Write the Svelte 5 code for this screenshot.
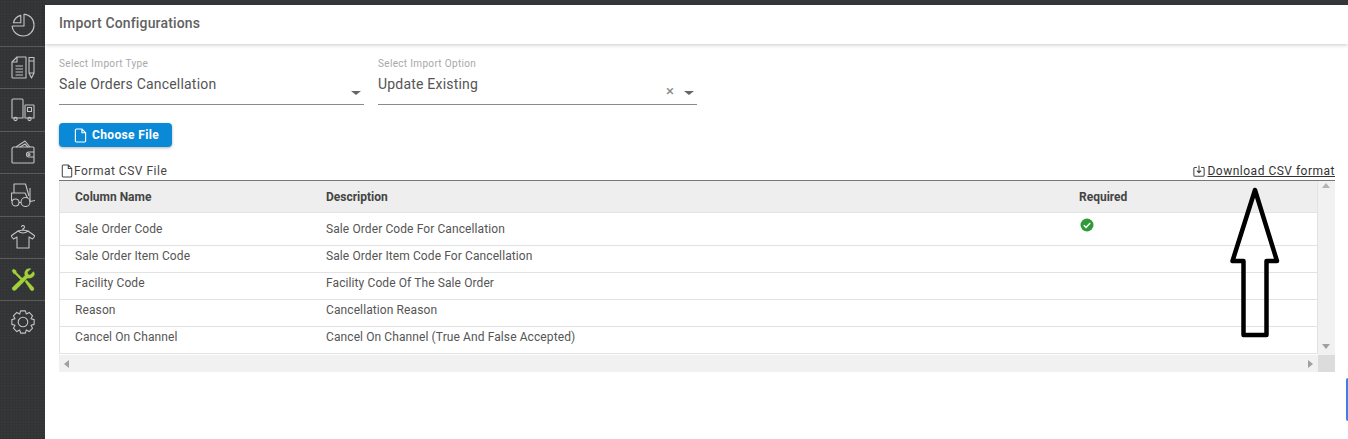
<script>
    const columns = [
        { name: 'Sale Order Code', description: 'Sale Order Code For Cancellation', required: true },
        { name: 'Sale Order Item Code', description: 'Sale Order Item Code For Cancellation' },
        { name: 'Facility Code', description: 'Facility Code Of The Sale Order' },
        { name: 'Reason', description: 'Cancellation Reason' },
        { name: 'Cancel On Channel', description: 'Cancel On Channel (True And False Accepted)' }
    ];

    // eight-tooth outline for the settings icon
    function gearPath(cx, cy, outer, inner, teeth) {
        const step = (Math.PI * 2) / teeth;
        const points = [];
        for (let i = 0; i < teeth; i++) {
            const a = i * step - Math.PI / 2;
            const offsets = [
                [-0.5, inner],
                [-0.27, outer],
                [0.27, outer],
                [0.5, inner]
            ];
            for (const [off, r] of offsets) {
                const angle = a + off * step;
                points.push((cx + r * Math.cos(angle)).toFixed(2) + ' ' + (cy + r * Math.sin(angle)).toFixed(2));
            }
        }
        return 'M' + points.join('L') + 'Z';
    }

    const gear = gearPath(12, 12, 11.4, 8.6, 8);
</script>

<div class="page">
    <nav class="sidebar">
        <div class="nav-item first">
            <svg viewBox="0 0 24 24" width="24" height="24">
                <path d="M13 1.100A11 11 0 1 1 1.100 13" />
                <path d="M13 1.100V13H1.100" />
                <path d="M9.800 2.400A10 10 0 0 0 2.400 9.800H9.800z" />
            </svg>
        </div>
        <div class="nav-item">
            <svg viewBox="0 0 24 24" width="24" height="24">
                <path d="M6 1h9v21H2q-1 0-1-1V6z" />
                <path d="M6 1v5H1M4.500 10h7.500M4.500 13h7.500M4.500 16h7.500M4.500 19h7.500" />
                <path d="M18 1.500h5V17l-2.500 5L18 17zM18 5h5M18 17h5" />
            </svg>
        </div>
        <div class="nav-item">
            <svg viewBox="0 0 24 24" width="24" height="24">
                <path d="M1 20V2q0-1 1-1h9q1 0 1 1v18z" />
                <path d="M14.500 7h8q.5 0 .5.500V20h-9V7.500q0-.5.500-.5z" />
                <path d="M16.500 9.500h4v4h-4z" />
                <circle cx="4.500" cy="21" r="1.600" />
                <circle cx="18.500" cy="21" r="1.600" />
            </svg>
        </div>
        <div class="nav-item">
            <svg viewBox="0 0 24 24" width="24" height="24">
                <path d="M3 7h19q1 0 1 1v14q0 1-1 1H2q-1 0-1-1V9q0-2 2-2z" />
                <path d="M5 7l9-6 5 6M9 7l5-3 3 3" />
                <path d="M23 12h-5a2.500 2.500 0 0 0 0 5h5" />
                <circle cx="18" cy="14.500" r="1" />
            </svg>
        </div>
        <div class="nav-item">
            <svg viewBox="0 0 24 24" width="24" height="24">
                <path d="M3 10V1h11.500L18 13" />
                <path d="M3 10H.5v8" />
                <path d="M3 10h11l2.500 5" />
                <path d="M8 19.500h2M19 5v13.500l5-1" />
                <circle cx="4.500" cy="19.500" r="3.500" />
                <circle cx="14.500" cy="19" r="4.500" />
            </svg>
        </div>
        <div class="nav-item">
            <svg viewBox="0 0 24 24" width="24" height="24">
                <path d="M12 5V3.500a1.500 1.500 0 1 0-1.500-1.500" />
                <path d="M7 6l5-1 5 1 7 5-2.500 3L18 12v11H6V12l-3.500 2L0 11z" />
                <path d="M7 6q5 4 10 0" />
            </svg>
        </div>
        <div class="nav-item active">
            <svg viewBox="0 0 24 24" width="24" height="24">
                <path class="solid" d="M1 2.500 2.500 1 5 2.500 5.500 4.500 13 12l-1.500 1.500L4 6 2.500 5.500z" />
                <path class="solid" d="M14 13.500 15.500 12 22.500 19.500q1.200 1.500 0 2.700t-2.700 0z" />
                <path class="solid" d="M22.500 3.500 19 7l-2-.5L16.500 4 20 .8Q16 0 14.500 2.500T14 7.500L1.800 19q-1.300 1.800 0 3t3 0L16.500 10q3.500.8 5.800-1.500t.2-5z" />
            </svg>
        </div>
        <div class="nav-item">
            <svg viewBox="0 0 24 24" width="24" height="24">
                <path d={gear} />
                <circle cx="12" cy="12" r="4.800" />
            </svg>
        </div>
    </nav>

    <main class="content">
        <header class="topbar">Import Configurations</header>

        <section class="body">
            <div class="filters">
                <div class="select">
                    <span class="select-label">Select Import Type</span>
                    <span class="select-value">Sale Orders Cancellation</span>
                    <span class="caret"></span>
                </div>
                <div class="select">
                    <span class="select-label">Select Import Option</span>
                    <span class="select-value">Update Existing</span>
                    <span class="clear">×</span>
                    <span class="caret"></span>
                </div>
            </div>

            <button class="choose-btn" type="button">
                <svg viewBox="0 0 14 16" width="13" height="15">
                    <path d="M2 1h6.500L12.500 5v9a1 1 0 0 1-1 1h-9a1 1 0 0 1-1-1V2a1 1 0 0 1 1-1zM8.500 1v4h4" />
                </svg>
                Choose File
            </button>

            <div class="table-heading">
                <span class="format">
                    <svg viewBox="0 0 14 16" width="12" height="14">
                        <path d="M2 1h6.500L12.500 5v9a1 1 0 0 1-1 1h-9a1 1 0 0 1-1-1V2a1 1 0 0 1 1-1zM8.500 1v4h4" />
                    </svg>
                    Format CSV File
                </span>
                <span class="download">
                    <svg viewBox="0 0 14 14" width="12" height="12">
                        <path d="M4.500 3H2q-1 0-1 1v8q0 1 1 1h10q1 0 1-1V4q0-1-1-1H9.500M7 .5V9M4.500 6.500 7 9l2.500-2.500" />
                    </svg>
                    <a href="#top">Download CSV format</a>
                </span>
            </div>

            <div class="table-wrap">
                <div class="table-row-area">
                    <table>
                        <colgroup>
                            <col class="col-name" />
                            <col class="col-desc" />
                            <col />
                        </colgroup>
                        <thead>
                            <tr>
                                <th>Column Name</th>
                                <th>Description</th>
                                <th>Required</th>
                            </tr>
                        </thead>
                        <tbody>
                            {#each columns as column}
                                <tr class:tall={column.required}>
                                    <td>{column.name}</td>
                                    <td>{column.description}</td>
                                    <td>
                                        {#if column.required}
                                            <svg class="check" viewBox="0 0 14 14" width="14" height="14">
                                                <circle cx="7" cy="7" r="6.500" />
                                                <path d="M3.800 7.200 6 9.400l4.200-4.400" />
                                            </svg>
                                        {/if}
                                    </td>
                                </tr>
                            {/each}
                        </tbody>
                    </table>
                    <div class="vscroll">
                        <span class="arrow up"></span>
                        <span class="arrow down"></span>
                    </div>
                </div>
                <div class="hscroll">
                    <div class="htrack">
                        <span class="arrow left"></span>
                        <span class="arrow right"></span>
                    </div>
                    <div class="corner"></div>
                </div>
            </div>
        </section>
    </main>

    <svg class="annotation" viewBox="0 0 60 156" width="60" height="156">
        <path d="M30 6 7.500 77H18.500V151H41.500V77H52z" />
    </svg>
    <div class="edge-tab"></div>
</div>

<style>
    :global(body) {
        margin: 0;
        background: #fff;
    }

    .page {
        position: relative;
        display: flex;
        height: 439px;
        overflow: hidden;
        font-family: Roboto, 'Noto Sans', sans-serif;
        background: #fff;
        color: #444;
    }

    .sidebar {
        flex: 0 0 45px;
        background-color: #363738;
        background-image:
            linear-gradient(rgba(0, 0, 0, 0.06) 1px, transparent 1px),
            linear-gradient(90deg, rgba(0, 0, 0, 0.06) 1px, transparent 1px);
        background-size: 3px 3px;
        display: flex;
        flex-direction: column;
    }

    .nav-item {
        box-sizing: border-box;
        height: 42.4px;
        display: flex;
        align-items: center;
        justify-content: center;
        border-top: 1px solid #5a5a5a;
    }

    .nav-item.first {
        height: 46px;
        border-top: 0;
        padding-top: 3px;
    }

    .nav-item svg {
        fill: none;
        stroke: #c4c4c4;
        stroke-width: 1.100;
        stroke-linejoin: round;
    }

    .nav-item.active svg .solid {
        fill: #a3d13a;
        stroke: #a3d13a;
        stroke-width: 0.300;
    }

    .content {
        flex: 1;
        min-width: 0;
        display: flex;
        flex-direction: column;
        border-top: 5px solid #363738;
    }

    .topbar {
        height: 39px;
        box-sizing: border-box;
        padding: 9px 0 0 14px;
        font-size: 14px;
        line-height: 18px;
        font-weight: 500;
        letter-spacing: 0.15px;
        color: #616161;
        background: #fff;
        box-shadow: 0 1px 4px rgba(0, 0, 0, 0.22);
    }

    .body {
        padding: 13px 13px 0 14px;
    }

    .filters {
        display: flex;
        gap: 14px;
    }

    .select {
        position: relative;
        box-sizing: border-box;
        width: 305px;
        height: 48px;
        padding-top: 1px;
        border-bottom: 1px solid #8a8a8a;
        display: flex;
        flex-direction: column;
    }

    .select + .select {
        width: 319px;
    }

    .select-label {
        font-size: 10px;
        line-height: 12px;
        letter-spacing: 0.33px;
        color: #a8a8a8;
    }

    .select-value {
        margin-top: 5px;
        font-size: 14px;
        line-height: 18px;
        letter-spacing: 0.2px;
        color: #555;
    }

    .caret {
        position: absolute;
        right: 3px;
        bottom: 9px;
        border-left: 5px solid transparent;
        border-right: 5px solid transparent;
        border-top: 4px solid #666;
    }

    .clear {
        position: absolute;
        right: 23px;
        bottom: 6px;
        font-size: 15px;
        line-height: 14px;
        color: #888;
    }

    .choose-btn {
        display: flex;
        align-items: center;
        gap: 5px;
        box-sizing: border-box;
        width: 113px;
        height: 24px;
        margin-top: 18px;
        padding: 0 0 0 15px;
        border: 0;
        border-radius: 4px;
        background: #0a8ad6;
        box-shadow: 0 1px 3px rgba(0, 0, 0, 0.3);
        color: #fff;
        font-family: inherit;
        font-size: 12px;
        font-weight: 700;
        letter-spacing: 0.35px;
    }

    .choose-btn svg {
        fill: none;
        stroke: #fff;
        stroke-width: 1.200;
    }

    .table-heading {
        display: flex;
        justify-content: space-between;
        align-items: center;
        height: 18px;
        margin-top: 15px;
        font-size: 12px;
        letter-spacing: 0.5px;
        color: #444;
    }

    .table-heading svg {
        fill: none;
        stroke: #444;
        stroke-width: 1.200;
    }

    .format,
    .download {
        display: flex;
        align-items: center;
        gap: 1px;
    }

    .format {
        margin-left: 2px;
    }

    .download {
        gap: 2px;
    }

    .download a {
        color: #333;
        text-decoration: underline;
    }

    .table-wrap {
        border-top: 1px solid #777;
        margin-top: 0;
    }

    .table-row-area {
        display: flex;
        height: 174px;
        overflow: hidden;
    }

    table {
        flex: 1;
        min-width: 0;
        height: 173px;
        table-layout: fixed;
        border-collapse: collapse;
        border-left: 1px solid #e2e2e2;
        border-right: 1px solid #e2e2e2;
        font-size: 12px;
    }

    .col-name {
        width: 251.5px;
    }

    .col-desc {
        width: 753px;
    }

    th {
        height: 31px;
        padding: 0 0 0 15px;
        background: #eee;
        border-bottom: 1px solid #e2e2e2;
        text-align: left;
        font-weight: 700;
        color: #444;
    }

    th + th,
    td + td {
        padding-left: 15px;
    }

    td {
        height: 27px;
        box-sizing: border-box;
        padding: 0 0 7px 15px;
        border-bottom: 1px solid #e2e2e2;
        color: #555;
        letter-spacing: 0.1px;
        vertical-align: middle;
    }

    tr.tall td {
        height: 33px;
        padding-bottom: 0;
    }

    tr.tall td:last-child {
        vertical-align: top;
        padding-top: 5px;
        padding-left: 16px;
    }

    .check circle {
        fill: #2e9a3a;
    }

    .check path {
        fill: none;
        stroke: #fff;
        stroke-width: 1.500;
    }

    .vscroll {
        position: relative;
        flex: 0 0 17px;
        background: #f1f1f1;
    }

    .arrow {
        position: absolute;
        width: 0;
        height: 0;
        border: 4px solid transparent;
    }

    .arrow.up {
        top: 2px;
        left: 4px;
        border-top: 0;
        border-bottom: 5px solid #b4b4b4;
    }

    .arrow.down {
        bottom: 6px;
        left: 4px;
        border-bottom: 0;
        border-top: 5px solid #a0a0a0;
    }

    .arrow.left {
        top: 5px;
        left: 5px;
        border-left: 0;
        border-right: 5px solid #a0a0a0;
    }

    .arrow.right {
        top: 5px;
        right: 5px;
        border-right: 0;
        border-left: 5px solid #a0a0a0;
    }

    .hscroll {
        display: flex;
        height: 17px;
    }

    .htrack {
        position: relative;
        flex: 1;
        background: #f1f1f1;
    }

    .corner {
        flex: 0 0 17px;
        background: #dcdcdc;
    }

    .annotation {
        position: absolute;
        left: 1225px;
        top: 184px;
    }

    .annotation path {
        fill: none;
        stroke: #000;
        stroke-width: 4.500;
        stroke-linejoin: round;
    }

    .edge-tab {
        position: absolute;
        right: 0;
        top: 378px;
        width: 2px;
        height: 43px;
        border-radius: 2px 0 0 2px;
        background: #3f7fe0;
    }
</style>
